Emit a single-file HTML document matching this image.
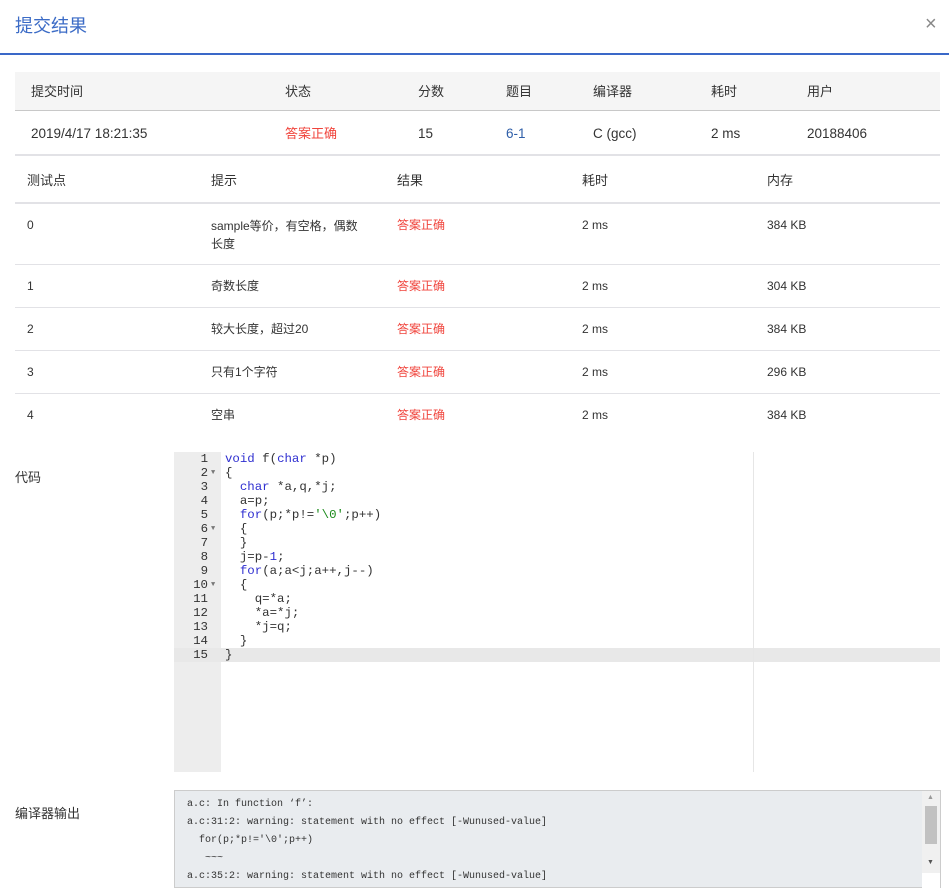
<!DOCTYPE html>
<html><head><meta charset="utf-8"><style>
*{margin:0;padding:0;box-sizing:border-box}
body{width:949px;height:888px;overflow:hidden;background:#fff;font-family:"Liberation Sans","Noto Sans CJK SC",sans-serif;font-size:13px;color:#333;position:relative}
.a{position:absolute;white-space:nowrap;line-height:16px}
.t1{font-size:13.5px}
.r{color:#f0443c}
.code{font-family:"Liberation Mono","DejaVu Sans Mono",monospace;font-size:12.4px;line-height:14px;white-space:pre}
.k{color:#2f2fd0}.s{color:#1a8a1a}
.out{font-family:"Liberation Mono",monospace;font-size:10px;color:#333;white-space:pre}
</style></head><body>
<div class="a" style="left:15px;top:15px;font-size:18px;line-height:22px;color:#3b6bc6">提交结果</div>
<div class="a" style="left:925px;top:14px;font-size:20px;line-height:20px;color:#888">×</div>
<div class="a" style="left:0;top:53px;width:949px;height:2px;background:#3a68c8"></div>

<div class="a" style="left:15px;top:72px;width:925px;height:39px;background:#f5f5f5;border-bottom:1px solid #c8c8c8"></div>
<div class="a" style="left:31px;top:84px">提交时间</div>
<div class="a" style="left:285px;top:84px">状态</div>
<div class="a" style="left:418px;top:84px">分数</div>
<div class="a" style="left:506px;top:84px">题目</div>
<div class="a" style="left:593px;top:84px">编译器</div>
<div class="a" style="left:711px;top:84px">耗时</div>
<div class="a" style="left:807px;top:84px">用户</div>
<div class="a t1" style="left:31px;top:126px">2019/4/17 18:21:35</div>
<div class="a r" style="left:285px;top:126px">答案正确</div>
<div class="a t1" style="left:418px;top:126px">15</div>
<div class="a t1" style="left:506px;top:126px;color:#2e5ea8">6-1</div>
<div class="a t1" style="left:593px;top:126px">C (gcc)</div>
<div class="a t1" style="left:711px;top:126px">2 ms</div>
<div class="a t1" style="left:807px;top:126px">20188406</div>
<div class="a" style="left:15px;top:154px;width:925px;height:2px;background:#e2e2e6"></div>

<div class="a" style="left:27px;top:173px">测试点</div>
<div class="a" style="left:211px;top:173px">提示</div>
<div class="a" style="left:397px;top:173px">结果</div>
<div class="a" style="left:582px;top:173px">耗时</div>
<div class="a" style="left:767px;top:173px">内存</div>
<div class="a" style="left:15px;top:202px;width:925px;height:2px;background:#e2e2e6"></div>

<div class="a" style="left:27px;top:217px;font-size:12px">0</div>
<div class="a" style="left:211px;top:217px;font-size:12px;line-height:18px">sample等价，有空格，偶数<br>长度</div>
<div class="a r" style="left:397px;top:217px;font-size:12px">答案正确</div>
<div class="a" style="left:582px;top:217px;font-size:12px">2 ms</div>
<div class="a" style="left:767px;top:217px;font-size:12px">384 KB</div>
<div class="a" style="left:15px;top:264px;width:925px;height:1px;background:#e2e2e6"></div>

<div class="a" style="left:27px;top:278px;font-size:12px">1</div>
<div class="a" style="left:211px;top:278px;font-size:12px">奇数长度</div>
<div class="a r" style="left:397px;top:278px;font-size:12px">答案正确</div>
<div class="a" style="left:582px;top:278px;font-size:12px">2 ms</div>
<div class="a" style="left:767px;top:278px;font-size:12px">304 KB</div>
<div class="a" style="left:15px;top:307px;width:925px;height:1px;background:#e2e2e6"></div>

<div class="a" style="left:27px;top:321px;font-size:12px">2</div>
<div class="a" style="left:211px;top:321px;font-size:12px">较大长度，超过20</div>
<div class="a r" style="left:397px;top:321px;font-size:12px">答案正确</div>
<div class="a" style="left:582px;top:321px;font-size:12px">2 ms</div>
<div class="a" style="left:767px;top:321px;font-size:12px">384 KB</div>
<div class="a" style="left:15px;top:350px;width:925px;height:1px;background:#e2e2e6"></div>

<div class="a" style="left:27px;top:364px;font-size:12px">3</div>
<div class="a" style="left:211px;top:364px;font-size:12px">只有1个字符</div>
<div class="a r" style="left:397px;top:364px;font-size:12px">答案正确</div>
<div class="a" style="left:582px;top:364px;font-size:12px">2 ms</div>
<div class="a" style="left:767px;top:364px;font-size:12px">296 KB</div>
<div class="a" style="left:15px;top:393px;width:925px;height:1px;background:#e2e2e6"></div>

<div class="a" style="left:27px;top:407px;font-size:12px">4</div>
<div class="a" style="left:211px;top:407px;font-size:12px">空串</div>
<div class="a r" style="left:397px;top:407px;font-size:12px">答案正确</div>
<div class="a" style="left:582px;top:407px;font-size:12px">2 ms</div>
<div class="a" style="left:767px;top:407px;font-size:12px">384 KB</div>

<div class="a" style="left:15px;top:470px">代码</div>
<div class="a" style="left:174px;top:452px;width:47px;height:320px;background:#ededed"></div>
<div class="a" style="left:174px;top:648px;width:766px;height:14px;background:#e8e8e8"></div>
<div class="a" style="left:753px;top:452px;width:1px;height:320px;background:#e6e6e6"></div>
<div class="a code" style="left:174px;top:452px;width:34px;text-align:right;color:#333">1
2
3
4
5
6
7
8
9
10
11
12
13
14
15</div>
<div class="a code" style="left:211px;top:452px;font-size:7px;color:#777;line-height:14px">
▼



▼



▼</div>
<div class="a code" style="left:225px;top:452px;color:#333"><span class="k">void</span> f(<span class="k">char</span> *p)
{
  <span class="k">char</span> *a,q,*j;
  a=p;
  <span class="k">for</span>(p;*p!=<span class="s">'\0'</span>;p++)
  {
  }
  j=p-<span class="k">1</span>;
  <span class="k">for</span>(a;a&lt;j;a++,j--)
  {
    q=*a;
    *a=*j;
    *j=q;
  }
}</div>

<div class="a" style="left:15px;top:806px">编译器输出</div>
<div class="a" style="left:174px;top:790px;width:767px;height:98px;background:#e9ecef;border:1px solid #ccc"></div>
<div class="a" style="left:922px;top:791px;width:18px;height:82px;background:#f0f0f0"></div>
<div class="a" style="left:925px;top:806px;width:12px;height:38px;background:#c1c1c1"></div>
<div class="a" style="left:927px;top:794px;font-size:7px;line-height:8px;color:#999">▲</div>
<div class="a" style="left:927px;top:859px;font-size:7px;line-height:8px;color:#555">▼</div>
<div class="a" style="left:922px;top:873px;width:18px;height:15px;background:#fff"></div>
<div class="a out" style="left:187px;top:796px;line-height:18px">a.c: In function ‘f’:
a.c:31:2: warning: statement with no effect [-Wunused-value]
  for(p;*p!='\0';p++)
<span style="line-height:10px">   ~~~</span>
a.c:35:2: warning: statement with no effect [-Wunused-value]</div>
</body></html>
